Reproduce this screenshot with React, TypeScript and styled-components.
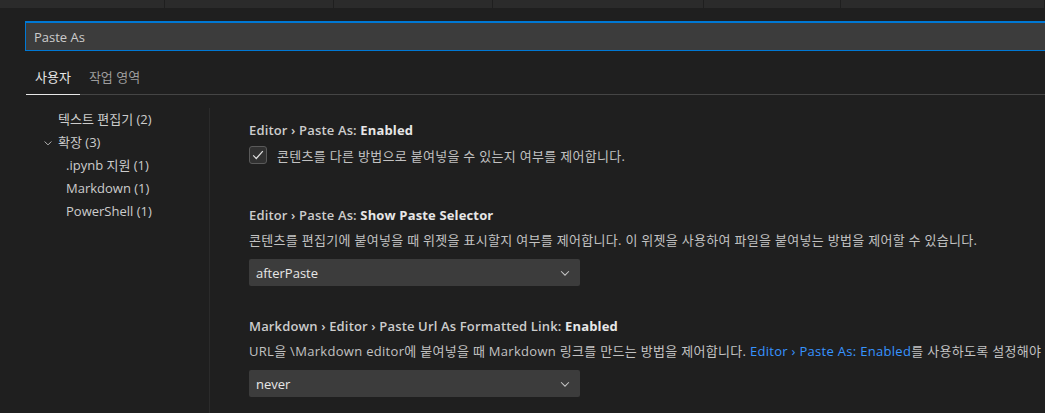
import styled, { createGlobalStyle } from "styled-components";

const GlobalStyle = createGlobalStyle`
  html, body {
    margin: 0;
    padding: 0;
    background: #1f1f1f;
    overflow: hidden;
  }
  body {
    font-family: "Open Sans", "Noto Sans CJK KR", sans-serif;
    font-size: 13px;
    color: #cccccc;
  }
`;

const Page = styled.div`
  width: 1045px;
  height: 413px;
  display: flex;
  flex-direction: column;
  overflow: hidden;
`;

const TabStrip = styled.div`
  height: 8px;
  display: flex;
  flex-shrink: 0;
`;

const EditorTab = styled.div<{ $w?: number }>`
  height: 100%;
  background: #2b2b2b;
  border-right: 1px solid #1f1f1f;
  ${(p) => (p.$w ? `width: ${p.$w}px;` : "flex: 1;")}
  flex-shrink: 0;
`;

const Header = styled.div`
  padding: 13px 0 0 25px;
`;

const SearchBox = styled.div`
  height: 27px;
  margin-right: -30px;
  background: #3c3c3c;
  border: 1px solid #0078d4;
  border-top-width: 2px;
  display: flex;
  align-items: center;
  padding-left: 8px;
  color: #cccccc;
`;

const ScopeTabs = styled.div`
  margin-top: 13px;
  margin-left: 1px;
  display: flex;
  border-bottom: 1px solid #454545;
`;

const ScopeTab = styled.div<{ $active?: boolean }>`
  padding: 4px 9px 8px;
  line-height: 18px;
  margin-bottom: -1px;
  border-bottom: 1px solid ${(p) => (p.$active ? "#e7e7e7" : "transparent")};
  color: ${(p) => (p.$active ? "#e7e7e7" : "#9d9d9d")};
`;

const Body = styled.div`
  flex: 1;
  display: flex;
  padding-top: 13px;
`;

const Toc = styled.div`
  width: 209px;
  flex-shrink: 0;
  border-right: 1px solid #2b2b2b;
  display: flex;
  flex-direction: column;
`;

const TocItem = styled.div<{ $indent: number }>`
  height: 23px;
  line-height: 23px;
  display: flex;
  align-items: center;
  padding-left: ${(p) => p.$indent}px;
  color: #cccccc;
  white-space: nowrap;
`;

const Twistie = styled.span`
  width: 16px;
  display: inline-flex;
  align-items: center;
`;

const Content = styled.div`
  flex: 1;
  padding: 13px 0 0 39px;
  display: flex;
  flex-direction: column;
  min-width: 0;
  overflow: hidden;
`;

const Setting = styled.div<{ $after: number }>`
  display: flex;
  flex-direction: column;
  padding-bottom: ${(p) => p.$after}px;
`;

const Title = styled.div`
  line-height: 18px;
  font-weight: 600;
  letter-spacing: 0.15px;
  color: #cccccc;
  white-space: nowrap;
`;

const Key = styled.span`
  color: #e7e7e7;
  font-weight: 700;
`;

const Description = styled.div`
  margin-top: 7px;
  line-height: 18px;
  letter-spacing: 0.3px;
  color: #c2c2c2;
  white-space: nowrap;
`;

const Link = styled.span`
  color: #3794ff;
`;

const CheckRow = styled.label`
  margin-top: 6px;
  display: flex;
  align-items: center;
  gap: 10px;
  height: 20px;
  letter-spacing: 0.3px;
  color: #c2c2c2;
`;

const CheckBox = styled.span`
  width: 16px;
  height: 16px;
  border: 1px solid #5a5a5a;
  border-radius: 3px;
  background: #313131;
  display: inline-flex;
  align-items: center;
  justify-content: center;
`;

const Select = styled.div`
  margin-top: 10px;
  width: 331px;
  height: 27px;
  box-sizing: border-box;
  background: #3c3c3c;
  border-radius: 2px;
  display: flex;
  align-items: center;
  justify-content: space-between;
  padding: 0 8px 0 7px;
  color: #e7e7e7;
`;

const Chevron = ({ size = 14 }: { size?: number }) => (
  <svg width={size} height={size} viewBox="0 0 16 16" fill="none">
    <path d="M3.5 6l4.5 4.5L12.5 6" stroke="#c5c5c5" strokeWidth="1.2" />
  </svg>
);

const tabs = [164, 168, 158, 210, 136];

const toc = [
  { label: "텍스트 편집기 (2)", indent: 58 },
  { label: "확장 (3)", indent: 42, twistie: true },
  { label: ".ipynb 지원 (1)", indent: 66 },
  { label: "Markdown (1)", indent: 66 },
  { label: "PowerShell (1)", indent: 66 },
];

export default function App() {
  return (
    <Page>
      <GlobalStyle />
      <TabStrip>
        {tabs.map((w, i) => (
          <EditorTab key={i} $w={w} />
        ))}
        <EditorTab />
      </TabStrip>
      <Header>
        <SearchBox>Paste As</SearchBox>
        <ScopeTabs>
          <ScopeTab $active>사용자</ScopeTab>
          <ScopeTab>작업 영역</ScopeTab>
        </ScopeTabs>
      </Header>
      <Body>
        <Toc>
          {toc.map((t) => (
            <TocItem key={t.label} $indent={t.indent}>
              {t.twistie && (
                <Twistie>
                  <Chevron size={12} />
                </Twistie>
              )}
              {t.label}
            </TocItem>
          ))}
        </Toc>
        <Content>
          <Setting $after={41}>
            <Title>
              Editor › Paste As: <Key>Enabled</Key>
            </Title>
            <CheckRow>
              <CheckBox>
                <svg width="14" height="14" viewBox="0 0 16 16" fill="none">
                  <path d="M2.5 8.5l3.5 3.5 7.5-8.5" stroke="#e0e0e0" strokeWidth="1.4" />
                </svg>
              </CheckBox>
              콘텐츠를 다른 방법으로 붙여넣을 수 있는지 여부를 제어합니다.
            </CheckRow>
          </Setting>
          <Setting $after={31}>
            <Title>
              Editor › Paste As: <Key>Show Paste Selector</Key>
            </Title>
            <Description>
              콘텐츠를 편집기에 붙여넣을 때 위젯을 표시할지 여부를 제어합니다. 이 위젯을 사용하여 파일을 붙여넣는 방법을 제어할 수 있습니다.
            </Description>
            <Select>
              afterPaste
              <Chevron />
            </Select>
          </Setting>
          <Setting $after={0}>
            <Title>
              Markdown › Editor › Paste Url As Formatted Link: <Key>Enabled</Key>
            </Title>
            <Description>
              URL을 \Markdown editor에 붙여넣을 때 Markdown 링크를 만드는 방법을 제어합니다.{" "}
              <Link>Editor › Paste As: Enabled</Link>를 사용하도록 설정해야 합니다.
            </Description>
            <Select>
              never
              <Chevron />
            </Select>
          </Setting>
        </Content>
      </Body>
    </Page>
  );
}
